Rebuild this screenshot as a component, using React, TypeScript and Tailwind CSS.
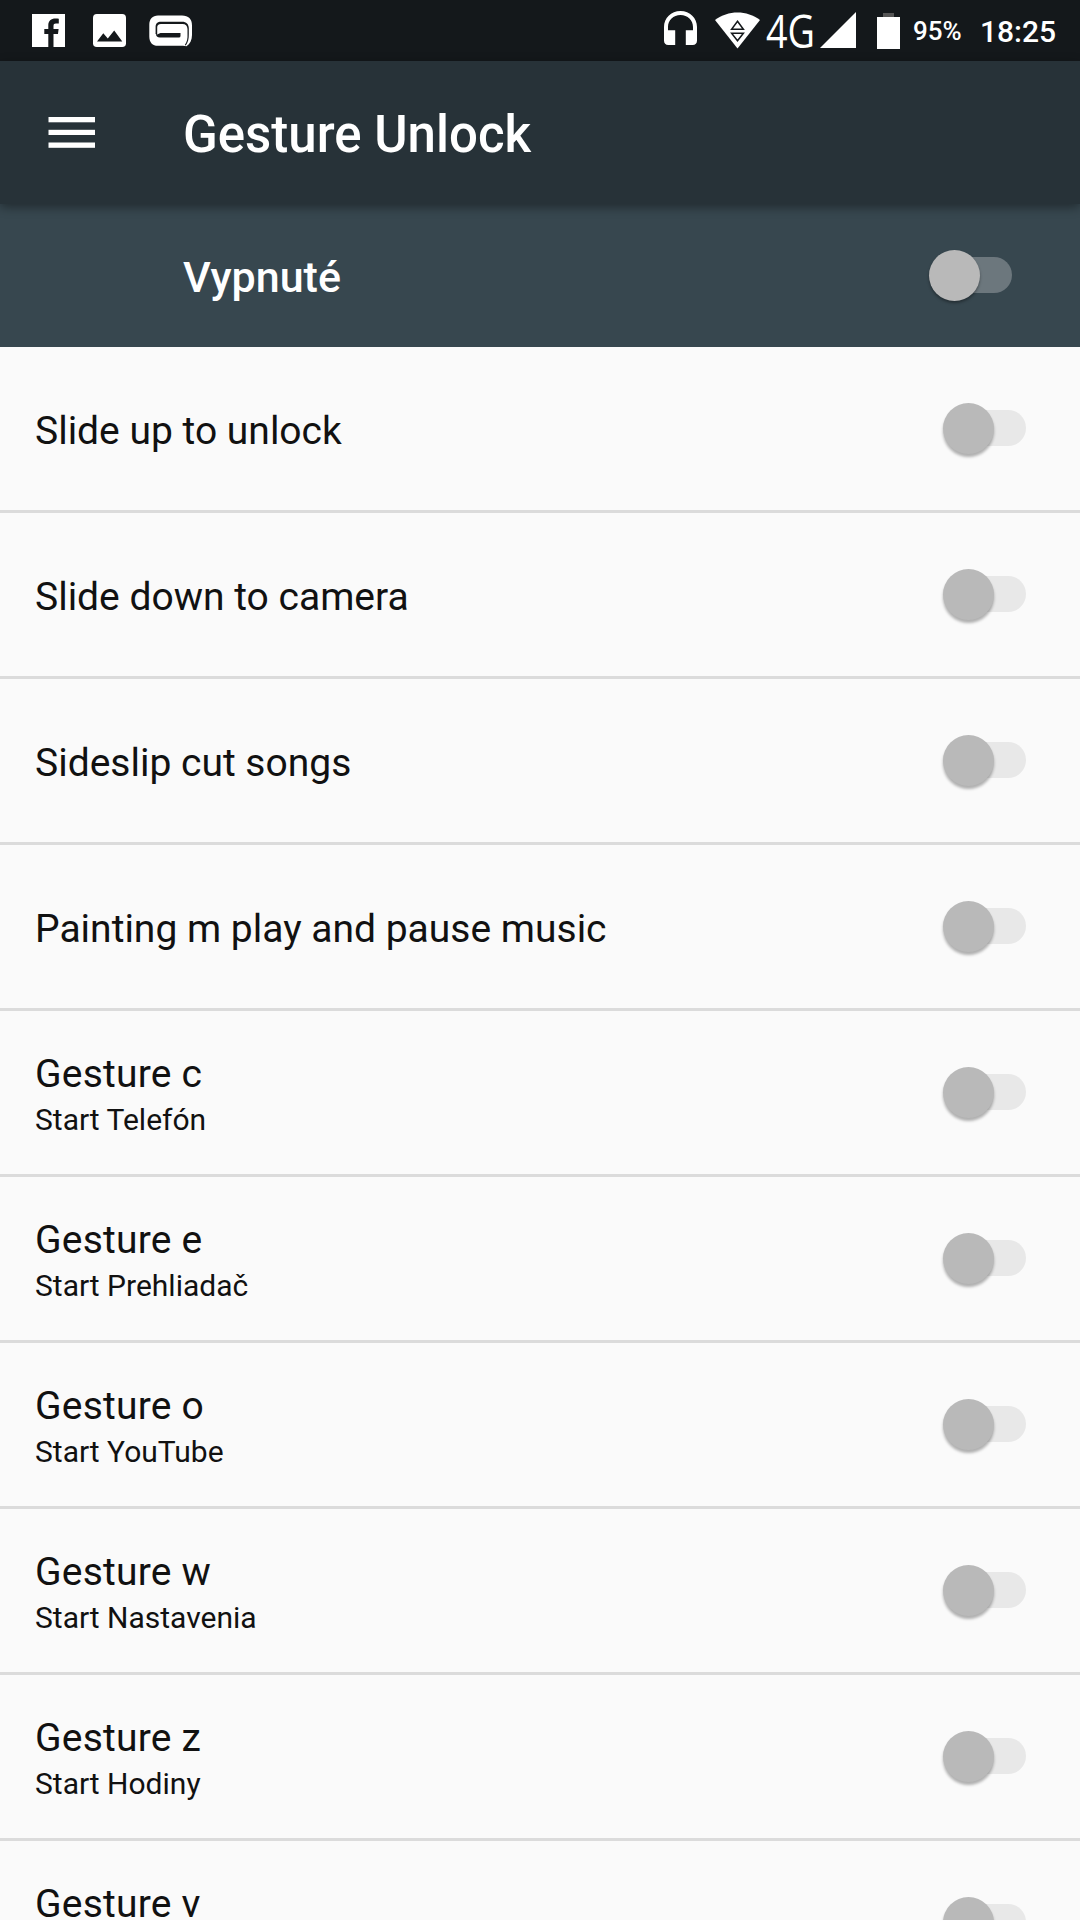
import clsx from "clsx";

type Gesture = {
  title: string;
  summary?: string;
};

const gestures: Gesture[] = [
  { title: "Slide up to unlock" },
  { title: "Slide down to camera" },
  { title: "Sideslip cut songs" },
  { title: "Painting m play and pause music" },
  { title: "Gesture c", summary: "Start Telefón" },
  { title: "Gesture e", summary: "Start Prehliadač" },
  { title: "Gesture o", summary: "Start YouTube" },
  { title: "Gesture w", summary: "Start Nastavenia" },
  { title: "Gesture z", summary: "Start Hodiny" },
  { title: "Gesture v", summary: "\u00a0" },
];

const FacebookIcon = () => (
  <svg width="33" height="33" viewBox="0 0 33 33" fill="#fff">
    <path d="M0 0H33V33H21.5V20H26L26.6 15H21.5V12C21.5 10.3 22.2 9.6 24 9.6H26.8V4.8C26 4.6 24.8 4.5 23.5 4.5C19 4.5 16.3 7 16.3 11.4V15H12.3V20H16.3V33H0Z" />
  </svg>
);

const PictureIcon = () => (
  <svg width="33" height="33" viewBox="0 0 33 33">
    <rect width="33" height="33" rx="3.8" fill="#fff" />
    <path d="M4 27.5L10.3 19.2L14.8 24.4L21.2 16.5L29.3 27.5Z" fill="#14181b" />
  </svg>
);

const GameloftIcon = () => (
  <svg width="43" height="32" viewBox="0 0 43 32">
    <path
      d="M9 0.6H33C39.5 0.6 43 4 43 10.5V20C43 25 41 29 37.5 31.3L34 30.8H9C3.5 30.8 0.3 27.5 0.3 21.5V10C0.3 4 3.5 0.6 9 0.6Z"
      fill="#fff"
    />
    {/* Upper arc with the tail that runs down the right side */}
    <path
      d="M6.6 19V12C6.6 8.5 8.6 6.8 12 6.8H33C37.5 6.8 39.6 9.3 39.8 13V19C39.9 24 39 27.5 36.8 30.4L35.8 30C38.2 26.5 38.7 23.5 38.5 19V14C38.3 10.6 36.6 9 33.5 9H12C9.3 9 8.2 10.2 8.2 12.6V19Z"
      fill="#14181b"
    />
    <path d="M6.8 18.5L8 19.6L11.5 18H31.5V21Q31.5 22.6 29.8 22.6H11Q7 22.6 6.8 18.5Z" fill="#14181b" />
  </svg>
);

const HeadphonesIcon = () => (
  <svg width="33" height="34" viewBox="0 0 33 34" fill="#fff">
    <path d="M16.5 0C7 0 0 7 0 16V29.5C0 32.3 1.6 34 4.3 34H11.2V19.3H4V16C4 9 9.3 4 16.5 4S29 9 29 16V19.3H21.8V34H28.7C31.4 34 33 32.3 33 29.5V16C33 7 26 0 16.5 0Z" />
  </svg>
);

const WifiIcon = () => (
  <svg width="45" height="37" viewBox="0 0 45 37">
    <path d="M0 8C13 -2 32 -2 45 8L22.5 36.5Z" fill="#fff" />
    <path
      d="M22.5 9.2L28.4 17.3H16.6ZM22.5 28.8L28.4 21.3H16.6Z"
      fill="#fff"
      stroke="#14181b"
      strokeWidth="1.5"
    />
  </svg>
);

const NetworkLabel = () => (
  <svg width="49" height="37" viewBox="0 0 49 37" className="overflow-visible">
    <text
      x="0"
      y="35.5"
      fill="#fff"
      fontSize="46"
      textLength="49"
      lengthAdjust="spacingAndGlyphs"
      className="font-['Open_Sans',sans-serif]"
    >
      4G
    </text>
  </svg>
);

const SignalIcon = () => (
  <svg width="36" height="36" viewBox="0 0 36 36">
    <path d="M36 0V36H0Z" fill="#fff" />
  </svg>
);

const BatteryIcon = () => (
  <svg width="23" height="36" viewBox="0 0 23 36">
    <rect x="6" width="11" height="4" fill="#555" />
    <rect y="4" width="23" height="32" fill="#fff" />
  </svg>
);

const MenuIcon = () => (
  <svg width="47" height="31" viewBox="0 0 47 31" fill="#fff">
    <rect x="0.5" y="0" width="46.5" height="5.3" />
    <rect x="0.5" y="12.8" width="46.5" height="5.2" />
    <rect x="0.5" y="25.5" width="46.5" height="5.3" />
  </svg>
);

const Switch = ({ dark = false }: { dark?: boolean }) => (
  <div className="relative flex h-[51px] w-[83px] shrink-0 items-start justify-end pt-[7px]">
    <div
      className={clsx(
        "h-9 w-[72px] rounded-full",
        dark ? "bg-[#6c777d]" : "bg-[#e8e8e8]"
      )}
    />
    <div
      className={clsx(
        "absolute left-0 top-0 size-[51px] rounded-full bg-[#b9b9b9]",
        dark
          ? "shadow-[0_2px_3px_rgba(0,0,0,0.35)]"
          : "shadow-[0_3px_3px_rgba(0,0,0,0.3)]"
      )}
    />
  </div>
);

const StatusBar = () => (
  <div className="flex h-[61px] shrink-0 items-start bg-[#14181b] pl-8 pr-[25px] text-white">
    <div className="flex gap-7 pt-3.5">
      <FacebookIcon />
      <PictureIcon />
      <div className="-ml-[5px] pt-px">
        <GameloftIcon />
      </div>
    </div>

    <div className="ml-auto flex">
      <div className="pt-[11px]">
        <HeadphonesIcon />
      </div>
      <div className="ml-[18px] pt-3">
        <WifiIcon />
      </div>
      <div className="ml-[6px] pt-3">
        <NetworkLabel />
      </div>
      <div className="ml-[5px] pt-3">
        <SignalIcon />
      </div>
      <div className="ml-[21px] pt-[13px]">
        <BatteryIcon />
      </div>
      <div className="ml-[13px] w-[49px] whitespace-nowrap pt-[15px] text-[26px] font-medium leading-8">
        95%
      </div>
      <div className="ml-[18px] w-[75px] whitespace-nowrap pt-4 text-[30px] font-medium leading-8">
        18:25
      </div>
    </div>
  </div>
);

const GestureRow = ({ title, summary }: Gesture) => (
  <div className="flex h-[166px] shrink-0 items-center justify-between border-b-[3px] border-[#dbdbdb] pl-[35px] pr-[54px] text-[#111]">
    <div className="pt-1.5">
      <div
        className={clsx(
          "text-[39px]",
          summary ? "leading-[48px] tracking-[0.2px]" : "leading-[47px]"
        )}
      >
        {title}
      </div>
      {summary && <div className="text-[30px] leading-[43px]">{summary}</div>}
    </div>
    <Switch />
  </div>
);

const App = () => {
  return (
    <div className="flex h-[1920px] w-[1080px] flex-col overflow-hidden bg-[#fafafa] font-[Roboto,sans-serif]">
      <StatusBar />

      {/* App bar */}
      <div className="relative flex h-[143px] shrink-0 items-center bg-[#273238] pl-12 text-white shadow-[0_3px_10px_rgba(0,0,0,0.4)]">
        <MenuIcon />
        <h1 className="ml-[88px] pt-1.5 text-[51px] font-medium">Gesture Unlock</h1>
      </div>

      {/* Master switch */}
      <div className="flex h-[143px] shrink-0 items-center justify-between bg-[#37474f] pl-[183px] pr-[68px] text-white">
        <div className="pt-1 text-[43px] font-medium">Vypnuté</div>
        <Switch dark />
      </div>

      {gestures.map((gesture) => (
        <GestureRow key={gesture.title} {...gesture} />
      ))}
    </div>
  );
};

export default App;
